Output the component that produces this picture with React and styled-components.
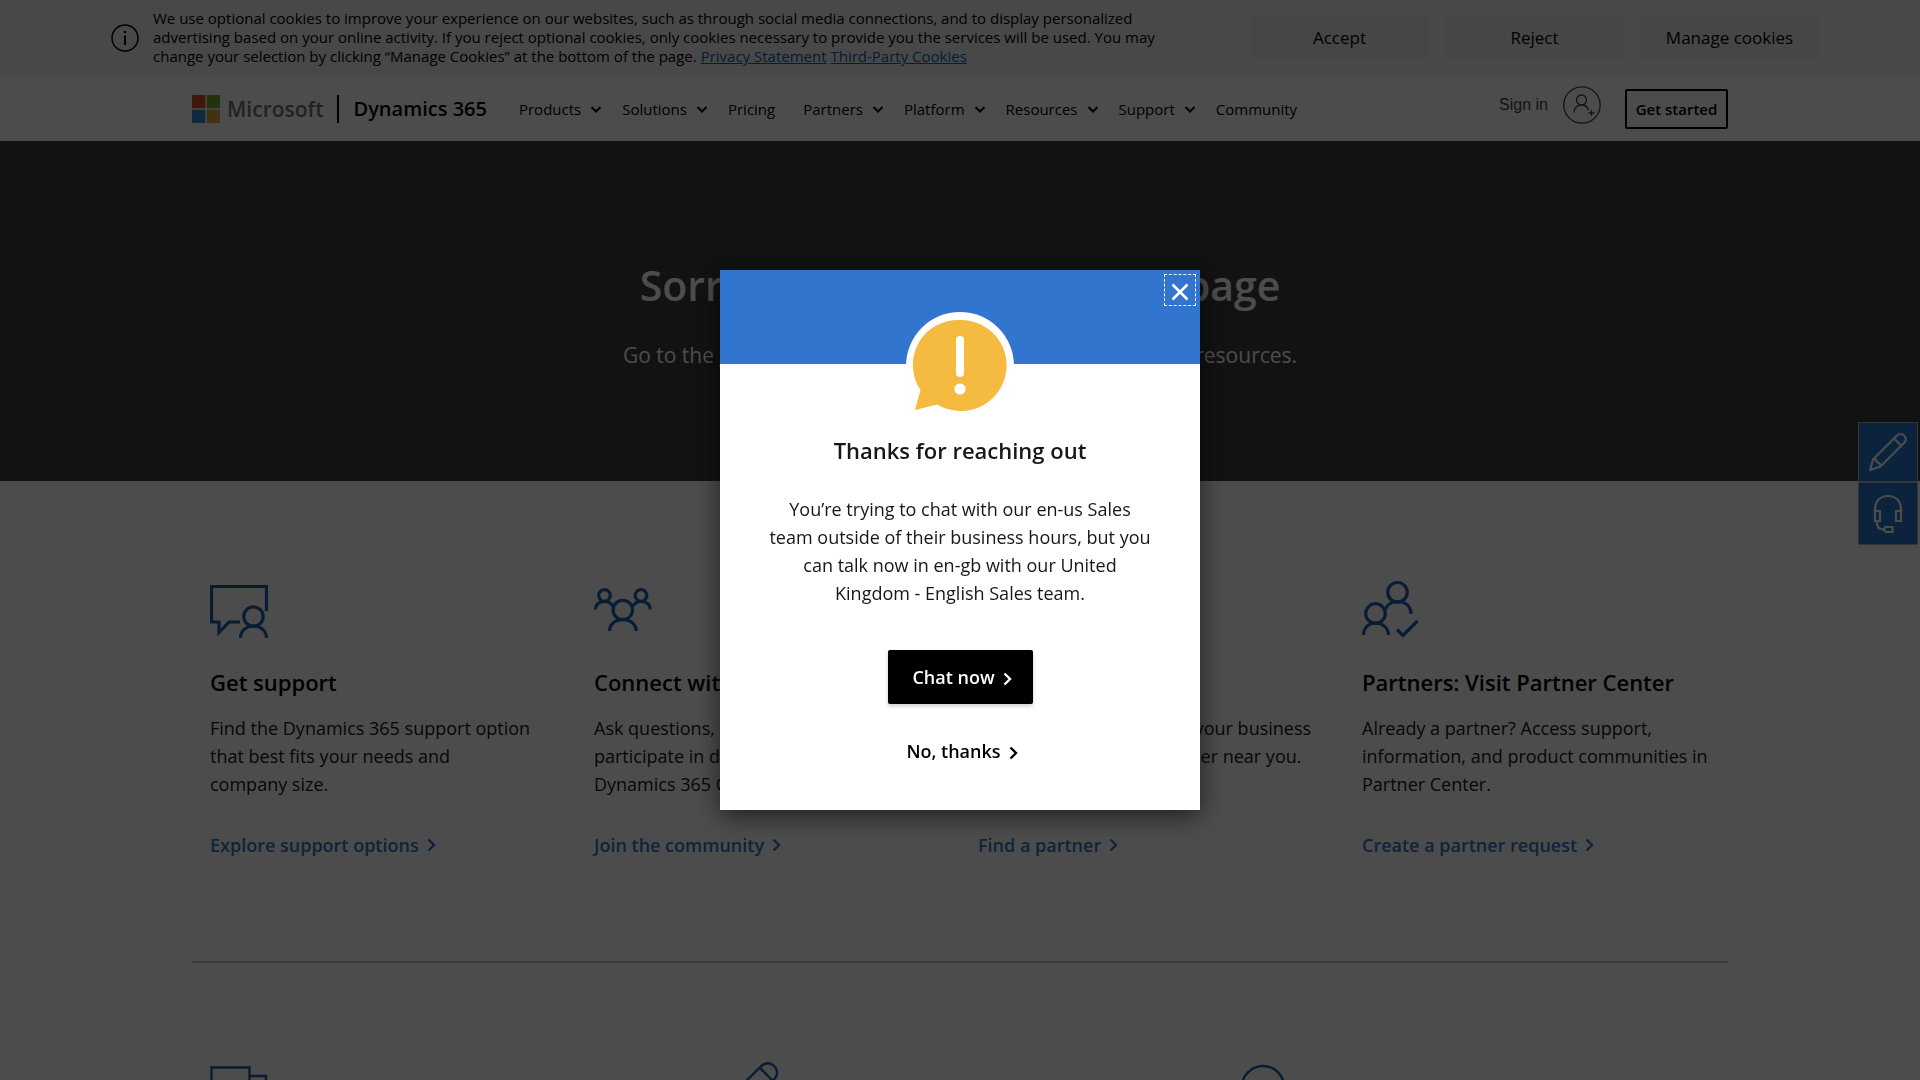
import React from "react";
import styled, { createGlobalStyle } from "styled-components";

const GlobalStyle = createGlobalStyle`
  * { box-sizing: border-box; }

  body {
    margin: 0;
    background: #fff;
    color: #171717;
    font-family: "Open Sans", "Noto Sans", sans-serif;
    overflow: hidden;
  }

  h1, h2, h3, p, ul { margin: 0; padding: 0; }
  ul { list-style: none; }
  button { font-family: inherit; cursor: pointer; }
  svg { display: block; flex: none; }
`;

const CookieBanner = styled.section`
  display: flex;
  align-items: center;
  justify-content: space-between;
  height: 75px;
  padding: 0 101px 0 111px;
  background: #f2f2f2;
`;

const CookieText = styled.div`
  display: flex;
  align-items: center;
  gap: 14px;

  p {
    max-width: 1010px;
    font-size: 15px;
    line-height: 19px;
    color: #000;
  }

  a { color: #0067b8; }
`;

const CookieActions = styled.div`
  display: flex;
  gap: 16px;
`;

const CookieButton = styled.button`
  width: 179px;
  height: 44px;
  border: 0;
  background: #ebebeb;
  color: #000;
  font-size: 17px;
`;

const Header = styled.header`
  display: flex;
  align-items: center;
  height: 66px;
  padding: 2px 10% 0;
  border-bottom: 1px solid #e6e6e6;
`;

const Logo = styled.a`
  display: flex;
  align-items: center;
  gap: 7px;
  color: #737373;
  font-size: 21px;
  font-weight: 600;
  line-height: 28px;
  text-decoration: none;
`;

const Product = styled.a`
  margin-left: 14px;
  padding-left: 14px;
  border-left: 2px solid #000;
  color: #000;
  font-size: 20px;
  font-weight: 600;
  line-height: 28px;
  text-decoration: none;
  white-space: nowrap;
`;

const Nav = styled.ul`
  display: flex;
  margin-left: 32px;
  gap: 20px;
`;

const NavButton = styled.button`
  display: flex;
  align-items: center;
  gap: 9px;
  padding: 0;
  border: 0;
  background: none;
  color: #000;
  font-size: 15px;
  line-height: 20px;
`;

const NavLink = styled.a`
  display: block;
  padding-right: 8px;
  color: #000;
  font-size: 15px;
  line-height: 20px;
  text-decoration: none;
`;

const Account = styled.div`
  display: flex;
  align-items: center;
  margin-left: auto;
  gap: 24px;
`;

const SignIn = styled.a`
  display: flex;
  align-items: center;
  gap: 15px;
  margin-bottom: 7px;
  color: #444;
  font: 16px/20px "Liberation Sans", Arial, sans-serif;
  text-decoration: none;
`;

const GetStarted = styled.button`
  width: 103px;
  height: 40px;
  padding: 0;
  border: 2px solid #000;
  border-radius: 2px;
  background: none;
  color: #000;
  font-size: 15px;
  font-weight: 600;
`;

const Hero = styled.section`
  height: 340px;
  padding-top: 114px;
  background: #3c3c3c;
  color: #fff;
  text-align: center;

  h1 {
    font-size: 41px;
    font-weight: 600;
    line-height: 60px;
  }

  p {
    margin-top: 24px;
    font-size: 21px;
    line-height: 32px;
  }

  a { color: inherit; }
`;

const Container = styled.main`
  margin: 0 10%;
`;

const Cards = styled.section`
  display: grid;
  grid-template-columns: repeat(${(p) => p.$columns}, 1fr);
`;

const Card = styled.article`
  padding: 0 18px;

  h2 {
    margin-top: 28px;
    font-size: 22px;
    font-weight: 600;
    line-height: 32px;
    color: #000;
    white-space: nowrap;
  }

  p {
    min-height: 84px;
    margin-top: 16px;
    font-size: 18px;
    line-height: 28px;
  }
`;

const CardLink = styled.a`
  display: inline-flex;
  align-items: center;
  gap: 8px;
  margin-top: 33px;
  color: #3375cd;
  font-size: 18px;
  font-weight: 600;
  line-height: 28px;
  text-decoration: none;
`;

const TopCards = styled(Cards)`
  padding: 99px 0 102px;
  border-bottom: 2px solid #c4c4c4;
`;

const BottomCards = styled(Cards)`
  padding-top: 98px;
`;

const SideBar = styled.aside`
  position: fixed;
  top: 422px;
  right: 2px;
  border: 1px solid #b4b4b4;
`;

const SideButton = styled.button`
  display: grid;
  place-items: center;
  width: 58px;
  height: 58px;
  padding: 0;
  border: 0;
  background: #2b75cf;
  color: #fff;

  & + & {
    height: 63px;
    border-top: 2px solid #b4b4b4;
  }
`;

const Overlay = styled.div`
  position: fixed;
  inset: 0;
  display: grid;
  place-items: center;
  background: rgba(0, 0, 0, 0.7);
`;

const Dialog = styled.div`
  position: relative;
  width: 480px;
  background: #fff;
  box-shadow: 0 6px 24px rgba(0, 0, 0, 0.6);
  text-align: center;

  h2 {
    margin-top: 24px;
    font-size: 22px;
    font-weight: 600;
    line-height: 32px;
  }

  p {
    margin: 29px 48px 0;
    font-size: 18px;
    line-height: 28px;
  }
`;

const DialogTop = styled.div`
  display: flex;
  justify-content: center;
  height: 140px;
  padding-top: 42px;
  background: linear-gradient(#3275cf 94px, #fff 94px);
`;

const CloseButton = styled.button`
  position: absolute;
  top: 4px;
  right: 4px;
  display: grid;
  place-items: center;
  width: 32px;
  height: 32px;
  padding: 3px 0 0;
  border: 1px dashed #fff;
  background: none;
  color: #fff;
`;

const DialogActions = styled.div`
  display: flex;
  flex-direction: column;
  align-items: center;
  gap: 31px;
  padding: 43px 0;
`;

const DialogButton = styled.button`
  display: flex;
  align-items: center;
  justify-content: center;
  gap: 8px;
  min-width: 145px;
  height: ${(p) => (p.$primary ? "54px" : "32px")};
  padding: 0 0 0 4px;
  border: 0;
  border-radius: 2px;
  background: ${(p) => (p.$primary ? "#000" : "none")};
  color: ${(p) => (p.$primary ? "#fff" : "#000")};
  box-shadow: ${(p) => (p.$primary ? "0 2px 4px rgba(0, 0, 0, 0.2)" : "none")};
  font-size: 18px;
  font-weight: 600;

  svg { margin-top: 3px; }
`;

function ChevronRight() {
  return (
    <svg width="9" height="14" viewBox="0 0 9 14" fill="none" stroke="currentColor" strokeWidth="2.4" aria-hidden="true">
      <path d="M1.5 1.5 7 7 1.5 12.5" />
    </svg>
  );
}

function ChevronDown() {
  return (
    <svg width="12" height="8" viewBox="0 0 12 8" fill="none" stroke="currentColor" strokeWidth="2" aria-hidden="true">
      <path d="M1.5 2 6 6.5 10.5 2" />
    </svg>
  );
}

function InfoIcon() {
  return (
    <svg width="28" height="28" viewBox="0 0 28 28" fill="none" stroke="#000" strokeWidth="1.5" aria-hidden="true">
      <circle cx="14" cy="14" r="13" />
      <path d="M14 11.5V21" strokeWidth="2" />
      <circle cx="14" cy="8" r="1.3" fill="#000" stroke="none" />
    </svg>
  );
}

function MicrosoftMark() {
  return (
    <svg width="28" height="28" viewBox="0 0 28 28" aria-hidden="true">
      <path fill="#d84b2c" d="M0 0h13.3v13.3H0z" />
      <path fill="#74a832" d="M14.7 0H28v13.3H14.7z" />
      <path fill="#2f94cf" d="M0 14.7h13.3V28H0z" />
      <path fill="#e0a93a" d="M14.7 14.7H28V28H14.7z" />
    </svg>
  );
}

function AccountIcon() {
  return (
    <svg width="38" height="38" viewBox="0 0 38 38" fill="none" stroke="#444" strokeWidth="1.3" aria-hidden="true">
      <circle cx="19" cy="19" r="18.2" />
      <circle cx="18.5" cy="14" r="5" />
      <path d="M11 26.500c0-4.500 3.200-7.500 7.500-7.500 3.600 0 6.200 2 7 5M25.500 27h6M28.500 24v6" />
    </svg>
  );
}

// All card pictograms share the same 58px box and line style
function CardIcon({ children }) {
  return (
    <svg width="58" height="58" viewBox="0 0 58 58" fill="none" stroke="#1f60b0" strokeWidth="3.2" aria-hidden="true">
      {children}
    </svg>
  );
}

const icons = {
  support: (
    <CardIcon>
      <path d="M56.500 31V6.500H1.500V42H9v10.500L19 42h11" />
      <circle cx="43.500" cy="36.500" r="9.700" />
      <path d="M30.500 58c0-7 5.500-12 13-12s13 5 13 12" />
    </CardIcon>
  ),
  community: (
    <CardIcon>
      <circle cx="10.500" cy="15.500" r="5.800" />
      <circle cx="47" cy="15.500" r="5.800" />
      <circle cx="28.800" cy="30" r="9.700" />
      <path d="M1.500 29.500c0-5 4-8.200 9-8.200 4 0 6.500 1.700 8.700 5M56.200 29.500c0-5-4-8.200-9-8.200-4 0-6.500 1.700-8.700 5M15.500 51c0-6.500 5.500-11.300 13.300-11.300S42.200 44.500 42.200 51" />
    </CardIcon>
  ),
  partner: (
    <CardIcon>
      <circle cx="29" cy="18" r="10" />
      <path d="M10 52c0-12 8-20 19-20s19 8 19 20" />
    </CardIcon>
  ),
  center: (
    <CardIcon>
      <circle cx="35.500" cy="12.300" r="9.800" />
      <circle cx="13.500" cy="33.500" r="9.800" />
      <path d="M1.500 55c0-7 5-12 12-12s13 5 13 12M23.500 29c2-4.500 6-7.500 12-7.500 8 0 13.500 5 13.500 12.500M35 49.500l6 6L55.500 41" />
    </CardIcon>
  ),
  building: (
    <CardIcon>
      <path d="M1.500 60V6.500h38V60M39.500 15H56v45" strokeWidth="2.400" />
    </CardIcon>
  ),
  pencil: (
    <CardIcon>
      <path d="M6 38 40 4.500c8-7 20 4 13 13L18 54M38 7l12 12" strokeWidth="2.400" />
    </CardIcon>
  ),
  globe: (
    <CardIcon>
      <circle cx="29" cy="26" r="21" strokeWidth="2.400" />
    </CardIcon>
  ),
};

function PencilIcon() {
  return (
    <svg width="40" height="40" viewBox="0 0 40 40" fill="none" stroke="currentColor" strokeWidth="2.2" strokeLinejoin="round" aria-hidden="true">
      <path d="M2 38 5 27.500 29 3.500c2-2 5-2 7 0s2.500 5 .5 7L12.500 34.500zM26 6.500l7.500 7.500M5 27.500c3-.5 4 1 4 3 2 0 3.500 1.500 3.500 4" />
    </svg>
  );
}

function HeadsetIcon() {
  return (
    <svg width="40" height="40" viewBox="0 0 40 40" fill="none" stroke="currentColor" strokeWidth="2.2" aria-hidden="true">
      <path d="M7 17v-2C7 7 12.500 2 20 2s13 5 13 13v2M7 17h5v10H7zM28 17h5v10h-5zM9 27v2c0 4 2.500 6.500 6.500 6.500M17.500 33h7v5h-7l-2-2.500z" />
    </svg>
  );
}

function WarningBubble() {
  return (
    <svg width="108" height="108" viewBox="0 0 108 108" aria-hidden="true">
      <circle cx="54" cy="54" r="54" fill="#fff" />
      <path fill="#f5bb41" d="M54 8a46 45.500 0 1 1-23 84.500L9 98l5.500-20A45 45 0 0 1 54 8z" />
      <rect x="50" y="24" width="8" height="41" rx="4" fill="#fff" />
      <circle cx="54" cy="77" r="5.600" fill="#fff" />
    </svg>
  );
}

const navItems = [
  { label: "Products", menu: true },
  { label: "Solutions", menu: true },
  { label: "Pricing" },
  { label: "Partners", menu: true },
  { label: "Platform", menu: true },
  { label: "Resources", menu: true },
  { label: "Support", menu: true },
  { label: "Community" },
];

const cards = [
  {
    icon: "support",
    title: "Get support",
    text: "Find the Dynamics 365 support option that best fits your needs and company\u00a0size.",
    link: "Explore support options",
  },
  {
    icon: "community",
    title: "Connect with peers",
    text: "Ask questions, find answers, and participate in discussions in the Dynamics 365 Community.",
    link: "Join the community",
  },
  {
    icon: "partner",
    title: "Find a partner",
    text: "Get expert advice to start your business by\u00a0connecting with a partner near you.",
    link: "Find a partner",
  },
  {
    icon: "center",
    title: "Partners: Visit Partner Center",
    text: "Already a partner? Access support, information, and product communities in Partner Center.",
    link: "Create a partner request",
  },
];

export default function App() {
  return (
    <>
      <GlobalStyle />
      <CookieBanner>
        <CookieText>
          <InfoIcon />
          <p>
            We use optional cookies to improve your experience on our websites, such as through social media
            connections, and to display personalized advertising based on your online activity. If you reject
            optional cookies, only cookies necessary to provide you the services will be used. You may change
            your selection by clicking “Manage Cookies” at the bottom of the page.{" "}
            <a href="#privacy">Privacy Statement</a> <a href="#cookies">Third-Party Cookies</a>
          </p>
        </CookieText>
        <CookieActions>
          <CookieButton>Accept</CookieButton>
          <CookieButton>Reject</CookieButton>
          <CookieButton>Manage cookies</CookieButton>
        </CookieActions>
      </CookieBanner>

      <Header>
        <Logo href="#microsoft">
          <MicrosoftMark />
          Microsoft
        </Logo>
        <Product href="#dynamics">Dynamics 365</Product>
        <nav>
          <Nav>
            {navItems.map((item) => (
              <li key={item.label}>
                {item.menu ? (
                  <NavButton>
                    {item.label}
                    <ChevronDown />
                  </NavButton>
                ) : (
                  <NavLink href="#page">{item.label}</NavLink>
                )}
              </li>
            ))}
          </Nav>
        </nav>
        <Account>
          <SignIn href="#signin">
            Sign in
            <AccountIcon />
          </SignIn>
          <GetStarted>Get started</GetStarted>
        </Account>
      </Header>

      <Hero>
        <h1>Sorry, we couldn’t find that page</h1>
        <p>
          Go to the <a href="#home">Dynamics 365 home page</a> or explore all of these resources.
        </p>
      </Hero>

      <Container>
        <TopCards $columns={4}>
          {cards.map((card) => (
            <Card key={card.icon}>
              {icons[card.icon]}
              <h2>{card.title}</h2>
              <p>{card.text}</p>
              <CardLink href="#more">
                {card.link}
                <ChevronRight />
              </CardLink>
            </Card>
          ))}
        </TopCards>
        <BottomCards $columns={3}>
          <Card>{icons.building}</Card>
          <Card>{icons.pencil}</Card>
          <Card>{icons.globe}</Card>
        </BottomCards>
      </Container>

      <SideBar>
        <SideButton aria-label="Feedback">
          <PencilIcon />
        </SideButton>
        <SideButton aria-label="Chat">
          <HeadsetIcon />
        </SideButton>
      </SideBar>

      <Overlay>
        <Dialog role="dialog" aria-modal="true" aria-labelledby="dialog-title">
          <DialogTop>
            <WarningBubble />
          </DialogTop>
          <CloseButton aria-label="Close">
            <svg width="18" height="18" viewBox="0 0 18 18" stroke="currentColor" strokeWidth="2.600" aria-hidden="true">
              <path d="M1.500 1.500l15 15M16.500 1.500l-15 15" />
            </svg>
          </CloseButton>
          <h2 id="dialog-title">Thanks for reaching out</h2>
          <p>
            You’re trying to chat with our en-us Sales team outside of their business hours, but you can talk now in
            en-gb with our United Kingdom - English Sales team.
          </p>
          <DialogActions>
            <DialogButton $primary>
              Chat now
              <ChevronRight />
            </DialogButton>
            <DialogButton>
              No, thanks
              <ChevronRight />
            </DialogButton>
          </DialogActions>
        </Dialog>
      </Overlay>
    </>
  );
}
